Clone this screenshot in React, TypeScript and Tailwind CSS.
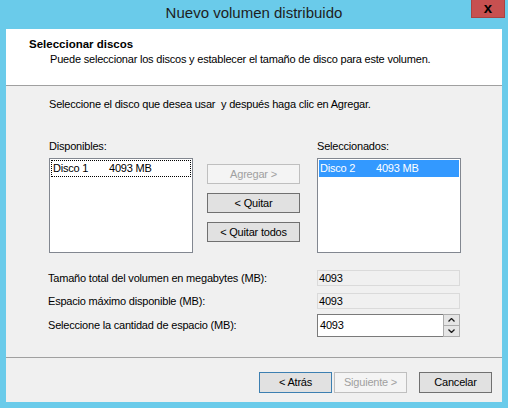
import type { ReactNode } from 'react';

type BtnProps = { children: ReactNode; disabled?: boolean; primary?: boolean; className?: string };

const Btn = ({ children, disabled, primary, className = '' }: BtnProps) => (
  <div
    className={`flex items-center justify-center border leading-none ${
      disabled
        ? 'bg-[#F4F4F4] border-[#BFBFBF] text-[#A0A0A0]'
        : primary
          ? 'bg-[#E1E1E1] border-[#3C7FB1] text-black'
          : 'bg-[#E1E1E1] border-[#707070] text-black'
    } ${className}`}
  >
    {children}
  </div>
);

const DiskRow = ({ name, size, selected }: { name: string; size: string; selected?: boolean }) => (
  <div
    className={`flex h-[17px] items-center leading-[17px] ${
      selected ? 'bg-[#3399FF] text-white' : 'border border-dotted border-black'
    }`}
  >
    <span className="w-[57px] pl-[1px]">{name}</span>
    <span>{size}</span>
  </div>
);

const ReadOnlyField = ({ value }: { value: string }) => (
  <div className="w-[143px] h-[16px] border border-[#DADADA] bg-[#F0F0F0] flex items-center pl-[1px] leading-none">
    {value}
  </div>
);

const Chevron = ({ up }: { up?: boolean }) => (
  <svg width="7" height="4" viewBox="0 0 7 4" className="block">
    <path d={up ? 'M0.5 3.5 L3.5 0.5 L6.5 3.5' : 'M0.5 0.5 L3.5 3.5 L6.5 0.5'} fill="none" stroke="#1a1a1a" strokeWidth="1.3" />
  </svg>
);

export default function App() {
  return (
    <div className="w-[508px] h-[408px] bg-[#6ACBEA] flex flex-col font-['Liberation_Sans',Arial,sans-serif] text-[11px] tracking-[-0.2px] text-black">
      {/* title bar */}
      <div className="relative h-[29px] shrink-0 flex items-center justify-center">
        <span className="text-[15px] tracking-normal text-[#1E1E1E] -mt-[3px]">Nuevo volumen distribuido</span>
        <div className="absolute top-0 right-[3px] w-[34px] h-[18px] bg-[#C75050] border border-t-0 border-[#A84343] flex items-center justify-center">
          <span className="text-[15px] font-black leading-none text-black -mt-[3px] tracking-normal">x</span>
        </div>
      </div>

      <div className="flex-1 mx-[6px] mb-[6px] bg-[#F0F0F0] flex flex-col">
        {/* header */}
        <div className="h-[57px] shrink-0 bg-white border-b border-[#A0A0A0] pl-[23px] pt-[8px] leading-[15px]">
          <div className="font-bold text-[11.5px] tracking-normal">Seleccionar discos</div>
          <div className="pl-[21px]">Puede seleccionar los discos y establecer el tamaño de disco para este volumen.</div>
        </div>

        {/* body */}
        <div className="pl-[43px] leading-[15px]">
          <div className="mt-[11px] whitespace-pre">Seleccione el disco que desea usar  y después haga clic en Agregar.</div>

          <div className="flex mt-[27px]">
            <span className="w-[268px]">Disponibles:</span>
            <span>Seleccionados:</span>
          </div>

          <div className="flex items-start mt-[4px]">
            <div className="w-[144px] h-[95px] border border-[#828790] bg-white p-[1px]">
              <DiskRow name="Disco 1" size="4093 MB" />
            </div>
            <div className="ml-[14px] mt-[6px] flex flex-col gap-[9px]">
              <Btn disabled className="w-[93px] h-[20px]">Agregar &gt;</Btn>
              <Btn className="w-[93px] h-[20px]">&lt; Quitar</Btn>
              <Btn className="w-[93px] h-[20px]">&lt; Quitar todos</Btn>
            </div>
            <div className="ml-[17px] w-[144px] h-[95px] border border-[#828790] bg-white p-[1px]">
              <DiskRow name="Disco 2" size="4093 MB" selected />
            </div>
          </div>
        </div>

        {/* size fields */}
        <div className="pl-[42px] mt-[17px] flex flex-col">
          <div className="flex items-center h-[16px]">
            <span className="w-[269px]">Tamaño total del volumen en megabytes (MB):</span>
            <ReadOnlyField value="4093" />
          </div>
          <div className="flex items-center h-[16px] mt-[7px]">
            <span className="w-[269px]">Espacio máximo disponible (MB):</span>
            <ReadOnlyField value="4093" />
          </div>
          <div className="flex items-center h-[23px] mt-[5px]">
            <span className="w-[269px]">Seleccione la cantidad de espacio (MB):</span>
            <div className="flex h-[23px]">
              <div className="w-[126px] h-full border border-[#7A7A7A] border-r-0 bg-white flex items-center pl-[2px] leading-none">
                4093
              </div>
              <div className="w-[17px] h-full flex flex-col border border-[#ACACAC] bg-[#ACACAC] gap-[1px]">
                <div className="flex-1 bg-[#E5E5E5] flex items-center justify-center">
                  <Chevron up />
                </div>
                <div className="flex-1 bg-[#E5E5E5] flex items-center justify-center">
                  <Chevron />
                </div>
              </div>
            </div>
          </div>
        </div>

        {/* footer */}
        <div className="mt-auto border-t border-[#A0A0A0] pt-[14px] pb-[9px] pr-[10px] flex justify-end">
          <Btn primary className="w-[73px] h-[21px]">&lt; Atrás</Btn>
          <Btn disabled className="w-[73px] h-[21px] ml-[2px]">Siguiente &gt;</Btn>
          <Btn className="w-[73px] h-[21px] ml-[12px]">Cancelar</Btn>
        </div>
      </div>
    </div>
  );
}
